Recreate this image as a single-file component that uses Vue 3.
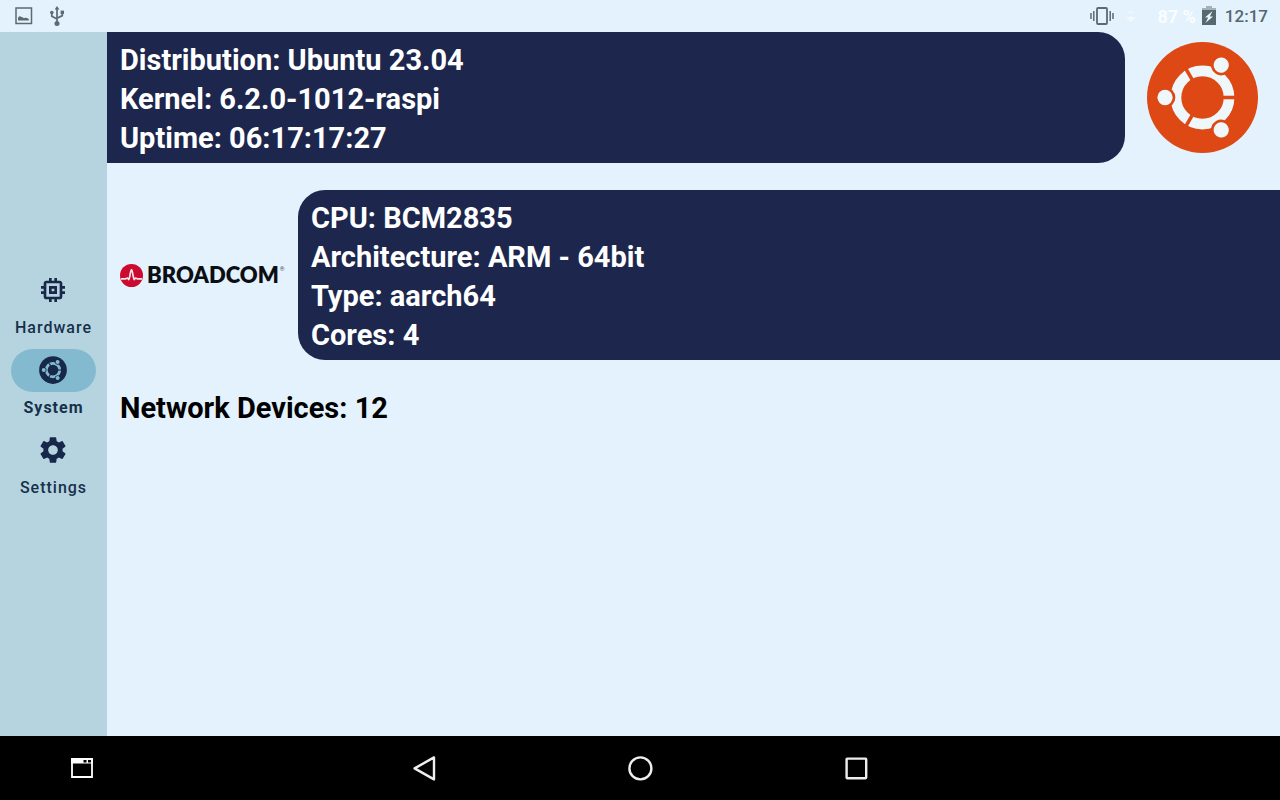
<script setup>
import { ref } from 'vue'

const active = ref('system')
const tabs = [
  { id: 'hardware', label: 'Hardware' },
  { id: 'system', label: 'System' },
  { id: 'settings', label: 'Settings' }
]
const distro = ['Distribution: Ubuntu 23.04', 'Kernel: 6.2.0-1012-raspi', 'Uptime: 06:17:17:27']
const cpu = ['CPU: BCM2835', 'Architecture: ARM - 64bit', 'Type: aarch64', 'Cores: 4']
</script>

<template>
  <div class="screen">
    <header class="status">
      <div class="notices">
        <svg width="18" height="18" viewBox="0 0 18 18" aria-hidden="true">
          <rect x="1" y="1" width="15.5" height="15.5" fill="none" stroke="#5b6b72" stroke-width="1.5" />
          <path d="M3 13.6v-2.8l1-1.2 1.3-.4 1 .9 1.3.2 1.2 1 1.4-.6 2 .3 1.6 1v1.6z" fill="#5b6b72" />
        </svg>
        <svg width="16" height="20" viewBox="0 0 16 20" aria-hidden="true">
          <g fill="#5b6b72">
            <path d="M8 0l2.4 3.6H5.6z" />
            <circle cx="8" cy="17.4" r="2.5" />
            <circle cx="2.8" cy="6.6" r="1.8" />
            <rect x="11.6" y="4.6" width="3.4" height="3.4" />
          </g>
          <path d="M8 2v14M2.8 7v3.2L8 13M13.3 7v2.6L8 12.2" fill="none" stroke="#5b6b72" stroke-width="1.7" />
        </svg>
      </div>
      <div class="indicators">
        <svg class="vibrate" width="24" height="18" viewBox="0 0 24 18" aria-hidden="true">
          <rect x="7" y="1" width="10" height="16" rx="1" fill="none" stroke="#5b6b72" stroke-width="1.8" />
          <path d="M3.8 4v10M20.2 4v10M1 6v6M23 6v6" fill="none" stroke="#5b6b72" stroke-width="1.5" />
        </svg>
        <svg class="wifi" width="14" height="14" viewBox="0 0 14 14" aria-hidden="true">
          <path d="M4 4q3-2 6 0" fill="none" stroke="#edf7fd" stroke-width="1.4" />
          <path d="M2 8h3q2-1.4 4 0h3l-5 5z" fill="#f1f9fe" />
        </svg>
        <span class="percent">87 %</span>
        <svg class="battery" width="14" height="20" viewBox="0 0 14 20" aria-hidden="true">
          <path d="M4 0h6v2h4v4H0V2h4z" fill="#a4b1b7" />
          <path d="M0 4h14v15H0z" fill="#566870" />
          <path d="M10.5 5L3 11.4h3.2L3.5 17l7.5-6.6H7.8z" fill="#eef7fb" />
        </svg>
        <time class="clock">12:17</time>
      </div>
    </header>

    <div class="body">
      <nav class="rail">
        <button
          v-for="tab in tabs"
          :key="tab.id"
          type="button"
          class="tab"
          :class="{ active: active === tab.id }"
          @click="active = tab.id"
        >
          <span class="pill">
            <svg v-if="tab.id === 'hardware'" width="32" height="32" viewBox="0 0 24 24" fill="#17284a" aria-hidden="true">
              <path d="M15 9H9v6h6V9zm-2 4h-2v-2h2v2zm8-2V9h-2V7c0-1.1-.9-2-2-2h-2V3h-2v2h-2V3H9v2H7c-1.1 0-2 .9-2 2v2H3v2h2v2H3v2h2v2c0 1.1.9 2 2 2h2v2h2v-2h2v2h2v-2h2c1.1 0 2-.9 2-2v-2h2v-2h-2v-2h2zm-4 6H7V7h10v10z" />
            </svg>
            <svg v-else-if="tab.id === 'system'" width="28" height="28" viewBox="-56 -56 112 112" aria-hidden="true">
              <circle r="55.5" fill="#17284a" />
              <circle r="27" fill="none" stroke="#84bad0" stroke-width="11" />
              <g v-for="a in [0, 120, 240]" :key="a" :transform="`rotate(${a})`">
                <path d="M18 0h18" stroke="#17284a" stroke-width="4.5" />
                <circle cx="-37" r="11" fill="#17284a" />
                <circle cx="-37" r="8" fill="#84bad0" />
              </g>
            </svg>
            <svg v-else width="32" height="32" viewBox="0 0 24 24" fill="#17284a" aria-hidden="true">
              <path d="M19.14 12.94c.04-.3.06-.61.06-.94 0-.32-.02-.64-.07-.94l2.03-1.58c.18-.14.23-.41.12-.61l-1.92-3.32c-.12-.22-.37-.29-.59-.22l-2.39.96c-.5-.38-1.03-.7-1.62-.94l-.36-2.54c-.04-.24-.24-.41-.48-.41h-3.84c-.24 0-.43.17-.47.41l-.36 2.54c-.59.24-1.13.57-1.62.94l-2.39-.96c-.22-.08-.47 0-.59.22L2.74 8.87c-.12.21-.08.47.12.61l2.03 1.58c-.05.3-.09.63-.09.94s.02.64.07.94l-2.03 1.58c-.18.14-.23.41-.12.61l1.92 3.32c.12.22.37.29.59.22l2.39-.96c.5.38 1.03.7 1.62.94l.36 2.54c.05.24.24.41.48.41h3.84c.24 0 .44-.17.47-.41l.36-2.54c.59-.24 1.13-.56 1.62-.94l2.39.96c.22.08.47 0 .59-.22l1.92-3.32c.12-.22.07-.47-.12-.61l-2.01-1.58zM12 15.6c-1.98 0-3.6-1.62-3.6-3.6s1.62-3.6 3.6-3.6 3.6 1.62 3.6 3.6-1.62 3.6-3.6 3.6z" />
            </svg>
          </span>
          <span class="label">{{ tab.label }}</span>
        </button>
      </nav>

      <main class="content">
        <section class="row">
          <div class="card distro">
            <p v-for="line in distro" :key="line">{{ line }}</p>
          </div>
          <div class="ubuntu">
            <svg width="111" height="111" viewBox="-56 -56 112 112" role="img" aria-label="Ubuntu">
              <circle r="56" fill="#dd4814" />
              <circle r="26.8" fill="none" stroke="#f0f7fb" stroke-width="10.8" />
              <g v-for="a in [0, 120, 240]" :key="a" :transform="`rotate(${a})`">
                <path d="M18 0h18" stroke="#dd4814" stroke-width="3.6" />
                <circle cx="-37.8" r="10.4" fill="#dd4814" />
                <circle cx="-37.8" r="7.7" fill="#f0f7fb" />
              </g>
            </svg>
          </div>
        </section>

        <section class="row">
          <div class="broadcom">
            <svg width="23" height="23" viewBox="0 0 24 24" aria-hidden="true">
              <circle cx="12" cy="12" r="12" fill="#cc092f" />
              <path d="M1 15.6h3.6c1.6 0 2.2-1 3.2-1 .6 0 .9 1.6 1.5 1.6.8 0 1.6-10.4 2.7-10.4s1.9 10.4 2.7 10.4c.6 0 .9-1.6 1.5-1.6 1 0 1.6 1 3.2 1H23" fill="none" stroke="#f3e6ec" stroke-width="1.8" stroke-linejoin="round" />
            </svg>
            <span class="wordmark">BROADCOM</span><span class="reg">®</span>
          </div>
          <div class="card cpu">
            <p v-for="line in cpu" :key="line">{{ line }}</p>
          </div>
        </section>

        <p class="network">Network Devices: 12</p>
      </main>
    </div>

    <footer class="navbar">
      <button type="button" class="window" aria-label="Window">
        <svg width="22" height="20" viewBox="0 0 22 20" aria-hidden="true">
          <path d="M1 1h20v18H1z" fill="none" stroke="#fff" stroke-width="1.8" />
          <path d="M0 0h22v5.5H0z" fill="#fff" />
          <path d="M12.5 2h3v2.6h-3zM17 2h3v2.6h-3z" fill="#000" />
        </svg>
      </button>
      <div class="keys">
        <button type="button" aria-label="Back">
          <svg width="26" height="26" viewBox="0 0 26 26" aria-hidden="true">
            <path d="M23 2.4v22L3.6 13.4z" fill="none" stroke="#eee" stroke-width="2.4" stroke-linejoin="round" />
          </svg>
        </button>
        <button type="button" aria-label="Home">
          <svg width="26" height="26" viewBox="0 0 26 26" aria-hidden="true">
            <circle cx="13.4" cy="13.4" r="11" fill="none" stroke="#eee" stroke-width="2.4" />
          </svg>
        </button>
        <button type="button" aria-label="Overview">
          <svg width="26" height="26" viewBox="0 0 26 26" aria-hidden="true">
            <rect x="3.6" y="3.6" width="19.6" height="19.6" rx="0.6" fill="none" stroke="#eee" stroke-width="2.4" />
          </svg>
        </button>
      </div>
    </footer>
  </div>
</template>

<style>
body {
  margin: 0;
}
</style>

<style scoped>
.screen {
  min-height: 100vh;
  display: flex;
  flex-direction: column;
  background: #e3f2fc;
  font-family: Roboto, "Liberation Sans", sans-serif;
}
svg {
  display: block;
  flex: none;
}
p {
  margin: 0;
}
button {
  border: 0;
  padding: 0;
  background: none;
  font: inherit;
  cursor: pointer;
}
.status {
  height: 32px;
  display: flex;
  align-items: center;
  justify-content: space-between;
  padding: 0 12px 0 15px;
}
.notices,
.indicators {
  display: flex;
  align-items: center;
}
.notices {
  gap: 16px;
}
.wifi {
  margin-left: 10px;
}
.percent {
  margin: 0 6px 0 19px;
  color: #fafdff;
  font-size: 18px;
  font-weight: 700;
}
.clock {
  margin-left: 9px;
  color: #56666e;
  font-size: 17px;
  font-weight: 500;
}
.body {
  flex: 1;
  display: flex;
}
.rail {
  width: 107px;
  flex: none;
  display: flex;
  flex-direction: column;
  align-items: center;
  justify-content: center;
  gap: 10px;
  background: #b6d4df;
}
.tab {
  display: flex;
  flex-direction: column;
  align-items: center;
  gap: 6px;
  padding-bottom: 1px;
  color: #17304a;
}
.pill {
  box-sizing: border-box;
  width: 85px;
  height: 43px;
  display: flex;
  align-items: center;
  justify-content: center;
  padding: 0 1px 1px 0;
  border-radius: 22px;
}
.active .pill {
  background: #84bad0;
}
.label {
  font-size: 16px;
  line-height: 20px;
  font-weight: 500;
  letter-spacing: 1px;
}
.active .label {
  font-weight: 700;
}
.content {
  flex: 1;
  min-width: 0;
  display: flex;
  flex-direction: column;
  gap: 27px;
}
.row {
  display: flex;
  align-items: center;
}
.card {
  flex: 1;
  padding: 9px 13px 5px;
  background: #1d264d;
  color: #fff;
}
.card,
.network {
  font-size: 29px;
  line-height: 39px;
  font-weight: 700;
}
.distro {
  border-radius: 0 27px 27px 0;
}
.cpu {
  border-radius: 27px 0 0 27px;
}
.ubuntu {
  padding: 0 22px;
}
.broadcom {
  width: 166px;
  display: flex;
  align-items: center;
  gap: 4px;
  padding: 0 12px 0 13px;
}
.wordmark {
  color: #0b0f14;
  font-family: Lato, sans-serif;
  font-size: 22px;
  line-height: 24px;
  font-weight: 800;
}
.reg {
  align-self: flex-start;
  margin-left: -3px;
  color: #4a5560;
  font-size: 6px;
  line-height: 12px;
}
.network {
  padding: 2px 13px;
  color: #000;
}
.navbar {
  height: 64px;
  display: grid;
  grid-template-columns: 1fr auto 1fr;
  align-items: center;
  background: #000;
}
.window {
  justify-self: start;
  margin-left: 71px;
}
.keys {
  display: flex;
  gap: 190px;
}
</style>
